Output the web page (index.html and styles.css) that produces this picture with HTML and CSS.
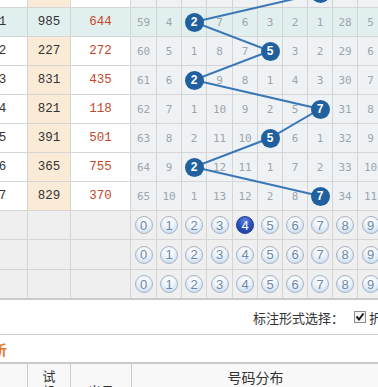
FILE: index.html
```html
<!DOCTYPE html>
<html lang="zh-CN">
<head>
<meta charset="utf-8">
<title>走势图</title>
<link rel="stylesheet" href="styles.css">
</head>
<body>
<div class="chart">
  <svg class="trend" width="450" height="240" viewBox="0 0 450 240">
    <polyline points="387,14 261,43 337,72 261,101 387,130 337,159 261,188 387,217"/>
  </svg>

  <div class="row">
    <div class="per">2019070</div><div class="tst">507</div><div class="opn">137</div>
    <div class="n">58</div><div class="n">3</div><div class="n">1</div><div class="n">6</div><div class="n">5</div><div class="n">2</div><div class="n">1</div><div class="n"><span class="ball">7</span></div><div class="n">27</div><div class="n">4</div>
  </div>
  <div class="row cur">
    <div class="per">2019071</div><div class="tst">985</div><div class="opn">644</div>
    <div class="n">59</div><div class="n">4</div><div class="n"><span class="ball">2</span></div><div class="n">7</div><div class="n">6</div><div class="n">3</div><div class="n">2</div><div class="n">1</div><div class="n">28</div><div class="n">5</div>
  </div>
  <div class="row">
    <div class="per">2019072</div><div class="tst">227</div><div class="opn">272</div>
    <div class="n">60</div><div class="n">5</div><div class="n">1</div><div class="n">8</div><div class="n">7</div><div class="n"><span class="ball">5</span></div><div class="n">3</div><div class="n">2</div><div class="n">29</div><div class="n">6</div>
  </div>
  <div class="row">
    <div class="per">2019073</div><div class="tst">831</div><div class="opn">435</div>
    <div class="n">61</div><div class="n">6</div><div class="n"><span class="ball">2</span></div><div class="n">9</div><div class="n">8</div><div class="n">1</div><div class="n">4</div><div class="n">3</div><div class="n">30</div><div class="n">7</div>
  </div>
  <div class="row">
    <div class="per">2019074</div><div class="tst">821</div><div class="opn">118</div>
    <div class="n">62</div><div class="n">7</div><div class="n">1</div><div class="n">10</div><div class="n">9</div><div class="n">2</div><div class="n">5</div><div class="n"><span class="ball">7</span></div><div class="n">31</div><div class="n">8</div>
  </div>
  <div class="row">
    <div class="per">2019075</div><div class="tst">391</div><div class="opn">501</div>
    <div class="n">63</div><div class="n">8</div><div class="n">2</div><div class="n">11</div><div class="n">10</div><div class="n"><span class="ball">5</span></div><div class="n">6</div><div class="n">1</div><div class="n">32</div><div class="n">9</div>
  </div>
  <div class="row">
    <div class="per">2019076</div><div class="tst">365</div><div class="opn">755</div>
    <div class="n">64</div><div class="n">9</div><div class="n"><span class="ball">2</span></div><div class="n">12</div><div class="n">11</div><div class="n">1</div><div class="n">7</div><div class="n">2</div><div class="n">33</div><div class="n">10</div>
  </div>
  <div class="row">
    <div class="per">2019077</div><div class="tst">829</div><div class="opn">370</div>
    <div class="n">65</div><div class="n">10</div><div class="n">1</div><div class="n">13</div><div class="n">12</div><div class="n">2</div><div class="n">8</div><div class="n"><span class="ball">7</span></div><div class="n">34</div><div class="n">11</div>
  </div>

  <div class="row pick">
    <div class="lbl"></div><div></div><div></div>
    <div><span class="opt">0</span></div><div><span class="opt">1</span></div><div><span class="opt">2</span></div><div><span class="opt">3</span></div><div><span class="opt on">4</span></div><div><span class="opt">5</span></div><div><span class="opt">6</span></div><div><span class="opt">7</span></div><div><span class="opt">8</span></div><div><span class="opt">9</span></div>
  </div>
  <div class="row pick tall">
    <div class="lbl">模拟选号</div><div></div><div></div>
    <div><span class="opt">0</span></div><div><span class="opt">1</span></div><div><span class="opt">2</span></div><div><span class="opt">3</span></div><div><span class="opt">4</span></div><div><span class="opt">5</span></div><div><span class="opt">6</span></div><div><span class="opt">7</span></div><div><span class="opt">8</span></div><div><span class="opt">9</span></div>
  </div>
  <div class="row pick">
    <div class="lbl">模拟选号</div><div></div><div></div>
    <div><span class="opt">0</span></div><div><span class="opt">1</span></div><div><span class="opt">2</span></div><div><span class="opt">3</span></div><div><span class="opt">4</span></div><div><span class="opt">5</span></div><div><span class="opt">6</span></div><div><span class="opt">7</span></div><div><span class="opt">8</span></div><div><span class="opt">9</span></div>
  </div>
</div>

<div class="mark-bar">
  <span>标注形式选择：</span>
  <svg class="chk" width="12" height="12" viewBox="0 0 12 12">
    <rect x="0.5" y="0.5" width="11" height="11" fill="#f4f4f4" stroke="#8a8a8a"/>
    <path d="M2.5 5.5 L5 8.5 L9.5 2.5" fill="none" stroke="#1a1a1a" stroke-width="2"/>
  </svg>
  <span class="chk-label">折线</span>
</div>

<div class="title-bar"><span class="title">号码走势分析</span></div>

<div class="head">
  <div class="h-mid">期号</div>
  <div class="h-mid"><span class="stack">试机号</span></div>
  <div class="h-mid">出号</div>
  <div class="h-top">号码分布</div>
</div>
</body>
</html>
```

FILE: styles.css
```css
* {
  box-sizing: border-box;
}

html,
body {
  margin: 0;
  padding: 0;
}

body {
  width: 378px;
  height: 387px;
  overflow: hidden;
  background: #fff;
  font-family: "Liberation Mono", "DejaVu Sans Mono", monospace;
}

/* ---------- trend table ---------- */
.chart {
  position: relative;
  width: 450px;
  margin: -21px 0 0 -67px;
  display: flex;
  flex-direction: column;
  gap: 1px;
  background: #d5d5d5;
  border-bottom: 2px solid #cbcbcb;
}

.trend {
  position: absolute;
  left: 0;
  top: 0;
  z-index: 1;
  pointer-events: none;
}

.trend polyline {
  fill: none;
  stroke: #3a77b6;
  stroke-width: 2;
}

.row {
  display: grid;
  grid-template-columns: 94px 42px 59px 25px 24px 24px 25px 24px 24px 24px 24px 24px 25px;
  column-gap: 1px;
  height: 28px;
}

.row.tall {
  height: 29px;
}

.row > div {
  display: flex;
  align-items: center;
  justify-content: center;
  overflow: visible;
}

.per {
  background: #fff;
  color: #333;
  font-size: 12.5px;
}

.tst {
  background: #faebd7;
  color: #333;
  font-size: 12.5px;
}

.opn {
  background: #fff;
  color: #c4472c;
  font-size: 12.5px;
}

.n {
  background: #eef2f5;
  color: #a0a5ac;
  font-family: "DejaVu Sans Mono", monospace;
  font-size: 11px;
}

.row.cur > div {
  background: #e1efee;
}

.ball {
  position: relative;
  z-index: 2;
  width: 19px;
  height: 19px;
  flex: none;
  border-radius: 50%;
  background: #20609e;
  color: #fff;
  font: bold 12px "Liberation Sans", Arial, sans-serif;
  display: flex;
  align-items: center;
  justify-content: center;
}

/* ---------- pick rows ---------- */
.row.pick > div {
  background: #efefef;
}

.lbl {
  color: #f0a8d4;
  font: 11px "Noto Sans CJK SC", sans-serif;
  padding-right: 4px;
}

.opt {
  width: 18px;
  height: 18px;
  flex: none;
  border-radius: 50%;
  border: 1px solid #a9b3bf;
  background: radial-gradient(circle at 50% 30%, #ffffff 0%, #eef5fc 40%, #bdd5ef 100%);
  color: #7287a4;
  font: 13px "Liberation Sans", Arial, sans-serif;
  display: flex;
  align-items: center;
  justify-content: center;
}

.opt.on {
  border-color: #1b3a92;
  background: radial-gradient(circle at 50% 25%, #5f86de 0%, #2d52bd 45%, #1b3c9e 100%);
  color: #fff;
}

/* ---------- marker selector ---------- */
.mark-bar {
  height: 35px;
  border-bottom: 1px solid #cccccc;
  display: flex;
  align-items: center;
  padding-left: 253px;
  white-space: nowrap;
  color: #333;
  font: 13px "Noto Sans CJK SC", sans-serif;
}

.chk {
  flex: none;
  margin-left: 10px;
}

.chk-label {
  margin-left: 3px;
}

/* ---------- section title ---------- */
.title-bar {
  height: 29px;
  border-bottom: 2px solid #cbcbcb;
  display: flex;
  align-items: center;
  white-space: nowrap;
}

.title {
  margin-left: -77px;
  color: #e67a26;
  font: bold 14px "Noto Sans CJK SC", sans-serif;
}

/* ---------- next table header ---------- */
.head {
  width: 446px;
  height: 52px;
  margin-left: -67px;
  display: grid;
  grid-template-columns: 94px 42px 60px 247px;
  column-gap: 1px;
  background: #cccccc;
  color: #333;
  font: 13px "Noto Sans CJK SC", sans-serif;
}

.head > div {
  background: #f8f8f8;
  display: flex;
  justify-content: center;
}

.h-mid {
  align-items: center;
}

.stack {
  width: 13px;
  line-height: 15px;
  text-align: center;
}

.h-top {
  align-items: flex-start;
  padding-top: 3px;
  font-size: 14px;
  line-height: 20px;
}
```
